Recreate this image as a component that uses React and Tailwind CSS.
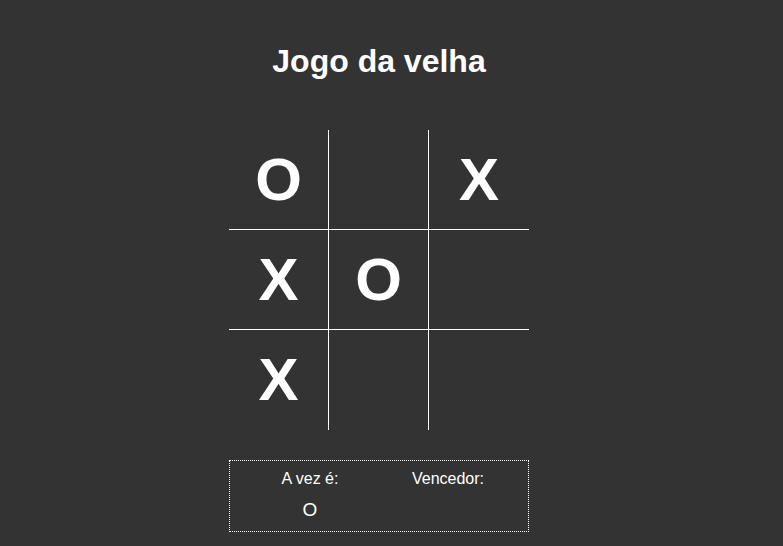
import React from "react";

const board = ["O", "", "X", "X", "O", "", "X", "", ""];

function Cell({ value, index }) {
  const col = index % 3;
  const row = Math.floor(index / 3);
  const right = col < 2 ? "border-r" : "";
  const bottom = row < 2 ? "border-b" : "";
  return (
    <div
      className={`w-[100px] h-[100px] flex items-center justify-center border-white text-[60px] font-bold leading-none text-white ${right} ${bottom}`}
    >
      {value}
    </div>
  );
}

export default function App() {
  return (
    <div className="min-h-screen w-full bg-[#333333] text-white font-['Liberation_Sans',Arial,sans-serif]">
      <div className="flex flex-col items-center pt-[43px] pr-[25px]">
        <h1 className="text-[32px] leading-[36px] font-bold">Jogo da velha</h1>

        <div className="mt-[51px] grid grid-cols-[100px_100px_100px]">
          {board.map((v, i) => (
            <Cell key={i} value={v} index={i} />
          ))}
        </div>

        <div className="mt-[30px] w-[300px] h-[72px] border border-dotted border-white flex pl-[40px] gap-[58px] pt-[9px]">
          <div className="w-[80px] flex flex-col items-center">
            <span className="text-[16px] leading-[18px]">A vez é:</span>
            <span className="mt-[11px] text-[19px] leading-[22px]">O</span>
          </div>
          <div className="w-[80px] flex flex-col items-center">
            <span className="text-[16px] leading-[18px]">Vencedor:</span>
          </div>
        </div>
      </div>
    </div>
  );
}
